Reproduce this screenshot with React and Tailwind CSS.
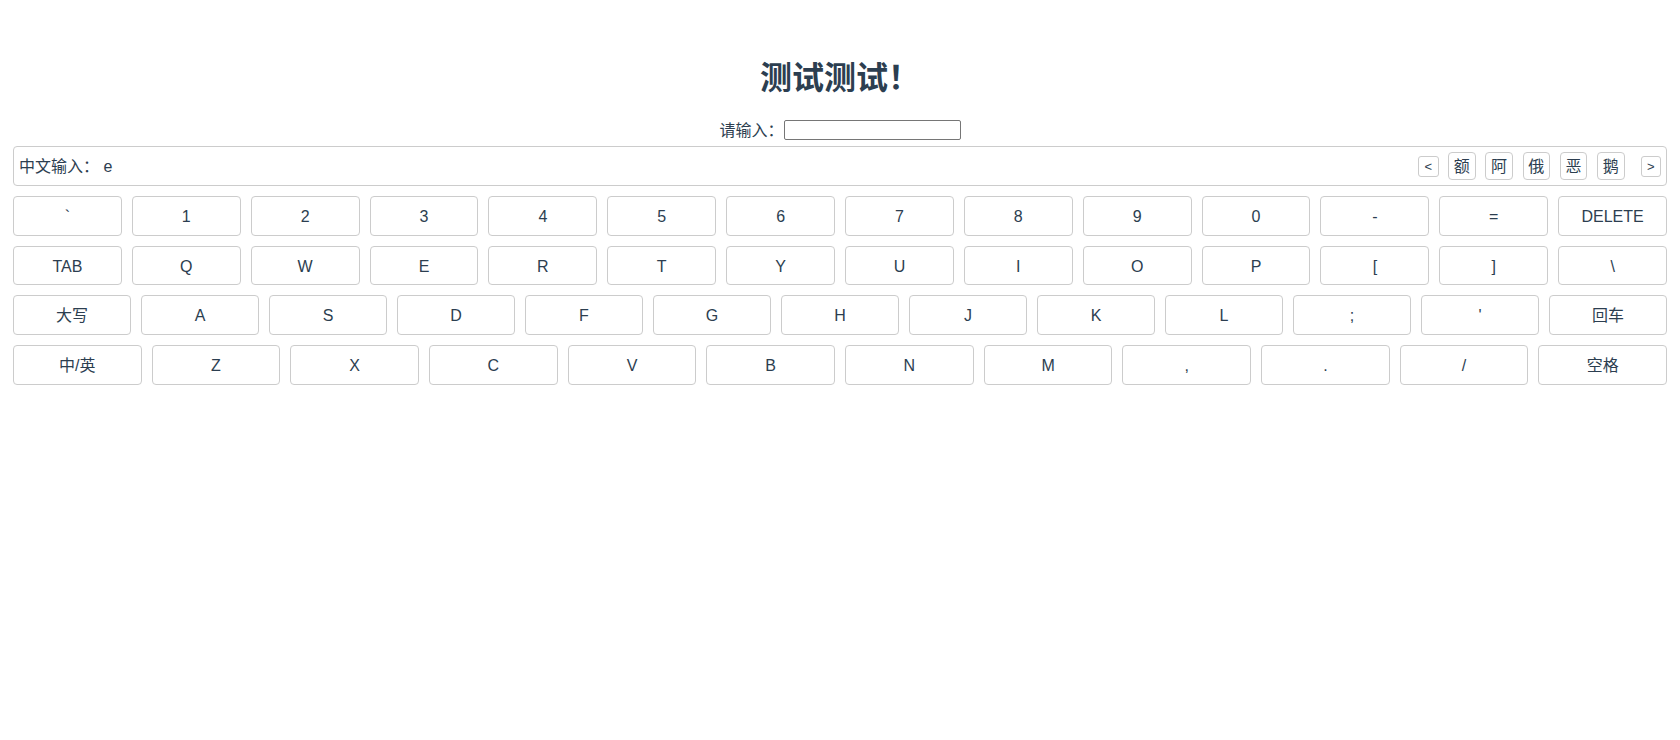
const rows = [
  ['`', '1', '2', '3', '4', '5', '6', '7', '8', '9', '0', '-', '=', 'DELETE'],
  ['TAB', 'Q', 'W', 'E', 'R', 'T', 'Y', 'U', 'I', 'O', 'P', '[', ']', '\\'],
  ['大写', 'A', 'S', 'D', 'F', 'G', 'H', 'J', 'K', 'L', ';', "'", '回车'],
  ['中/英', 'Z', 'X', 'C', 'V', 'B', 'N', 'M', ',', '.', '/', '空格'],
]

const candidates = ['额', '阿', '俄', '恶', '鹅']

export default function App() {
  return (
    <div
      className="min-h-screen bg-white px-[8px] pt-[60px] text-center text-[#2c3e50]"
      style={{ fontFamily: '"Liberation Sans", "Noto Sans CJK SC", sans-serif' }}
    >
      <h1 className="h-[37px] text-[32px] font-bold leading-[37px]">测试测试！</h1>

      <div className="mt-[21.44px] flex h-[24px] items-center justify-center text-[16px]">
        <span className="pt-[2px] leading-[20px]">请输入：</span>
        <input className="h-[20px] w-[177px] rounded-[2px] border border-[#767676] bg-white px-[2px] text-[13px] outline-none" />
      </div>

      <div className="mx-[5px] mt-[4px] flex h-[39.67px] items-center rounded-[4px] border border-[#ccc] pl-[5px] pr-[5px] text-[16px]">
        <span className="flex-1 pt-[2px] text-left leading-[20px]">中文输入： e</span>
        <button className="flex h-[21px] w-[20.5px] items-center justify-center rounded-[3px] border border-[#ccc] bg-white text-[13px] leading-none text-[#2c3e50]">
          &lt;
        </button>
        <div className="ml-[9.5px] flex gap-[9.75px]">
          {candidates.map(c => (
            <button
              key={c}
              className="flex h-[28px] w-[27.5px] items-center justify-center rounded-[4px] border border-[#ccc] bg-white pt-[1px] text-[16px] leading-none text-[#2c3e50]"
            >
              {c}
            </button>
          ))}
        </div>
        <button className="ml-[16px] flex h-[21px] w-[20.5px] items-center justify-center rounded-[3px] border border-[#ccc] bg-white text-[13px] leading-none text-[#2c3e50]">
          &gt;
        </button>
      </div>

      <div className="mt-[10px] flex flex-col gap-[10px]">
        {rows.map((row, i) => (
          <div key={i} className="flex">
            {row.map(k => (
              <button
                key={k}
                className="mx-[5px] flex h-[39.67px] min-w-0 flex-1 items-center justify-center rounded-[4px] border border-[#ccc] bg-white pt-[2px] text-[16px] leading-none text-[#2c3e50]"
              >
                {k}
              </button>
            ))}
          </div>
        ))}
      </div>
    </div>
  )
}
